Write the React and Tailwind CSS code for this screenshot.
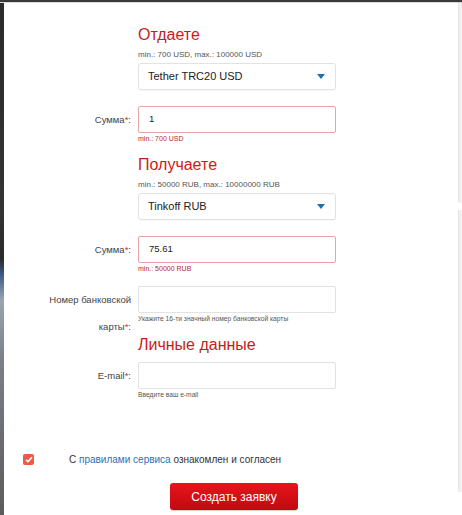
import React from "react";

function Row({ label, children }) {
  return (
    <div className="grid grid-cols-[127px_198px] gap-x-[7px]">
      <div className="h-[27px] text-right text-[9.5px] leading-[27px] text-[#444]">
        {label}
      </div>
      <div>{children}</div>
    </div>
  );
}

function Req() {
  return <span className="text-[#e03030]">*</span>;
}

function Select({ value }) {
  return (
    <div className="flex h-[27px] w-[198px] items-center justify-between rounded-[3px] border border-[#e2e2e2] bg-white pl-[9px] pr-[10px] shadow-[0_1px_1px_rgba(0,0,0,0.03)]">
      <span className="text-[11px] text-[#222]">{value}</span>
      <svg width="8" height="5" viewBox="0 0 8 5">
        <path d="M0 0 L8 0 L4 5 Z" fill="#1f6fae" />
      </svg>
    </div>
  );
}

function Input({ value, error }) {
  return (
    <div
      className={
        "flex h-[27px] w-[198px] items-center rounded-[2px] border bg-white pl-[10px] text-[9.5px] text-[#222] " +
        (error ? "border-[#e9a3a3]" : "border-[#e2e2e2]")
      }
    >
      {value}
    </div>
  );
}

function Heading({ children }) {
  return (
    <div className="text-[16px] leading-[20px] text-[#cc1a1a]">{children}</div>
  );
}

export default function App() {
  return (
    <div
      className="relative flex h-[515px] w-[462px] flex-col overflow-hidden bg-white"
      style={{ fontFamily: '"Liberation Sans", Arial, sans-serif' }}
    >
      <div className="h-[2px] w-full bg-[#3a3a3a]" />
      <div className="h-[1px] w-full bg-[#d8d8d8]" />
      <div className="flex flex-1">
        <div className="w-[4px] bg-[linear-gradient(to_bottom,#2b2b2b_0%,#333_40%,#2a2a2a_50%,#3d5a85_53%,#9aa4b2_58%,#7a7f88_70%,#5b5b5b_100%)]" />
        <div className="flex flex-1 flex-col">
          <div className="mt-[22px] flex flex-col">
            <div className="grid grid-cols-[127px_198px] gap-x-[7px]">
              <div />
              <div>
                <Heading>Отдаете</Heading>
                <div className="mt-[5px] text-[8px] leading-[10px] text-[#555]">
                  min.: 700 USD, max.: 100000 USD
                </div>
                <div className="mt-[3px]">
                  <Select value="Tether TRC20 USD" />
                </div>
              </div>
            </div>
            <div className="mt-[16px]">
              <Row label={<>Сумма<Req />:</>}>
                <Input value="1" error />
                <div className="mt-[1px] text-[7px] leading-[10px] text-[#b02828]">
                  min.: 700 USD
                </div>
              </Row>
            </div>
            <div className="mt-[11px] grid grid-cols-[127px_198px] gap-x-[7px]">
              <div />
              <div>
                <Heading>Получаете</Heading>
                <div className="mt-[5px] text-[8px] leading-[10px] text-[#555]">
                  min.: 50000 RUB, max.: 10000000 RUB
                </div>
                <div className="mt-[3px]">
                  <Select value="Tinkoff RUB" />
                </div>
              </div>
            </div>
            <div className="mt-[16px]">
              <Row label={<>Сумма<Req />:</>}>
                <Input value="75.61" error />
                <div className="mt-[1px] text-[7px] leading-[10px] text-[#b02828]">
                  min.: 50000 RUB
                </div>
              </Row>
            </div>
            <div className="mt-[12px]">
              <Row
                label={
                  <>
                    <div>Номер банковской</div>
                    <div>
                      карты<Req />:
                    </div>
                  </>
                }
              >
                <Input value="" />
                <div className="mt-[1px] text-[6.7px] leading-[10px] text-[#555]">
                  Укажите 16-ти значный номер банковской карты
                </div>
              </Row>
            </div>
            <div className="mt-[11px] grid grid-cols-[127px_198px] gap-x-[7px]">
              <div />
              <Heading>Личные данные</Heading>
            </div>
            <div className="mt-[7px]">
              <Row label={<>E-mail<Req />:</>}>
                <Input value="" />
                <div className="mt-[1px] text-[6.7px] leading-[10px] text-[#555]">
                  Введите ваш e-mail
                </div>
              </Row>
            </div>
          </div>
          <div className="mt-[52px] flex items-center">
            <div className="ml-[19px] flex h-[11px] w-[11px] items-center justify-center rounded-[2px] bg-[#ef5a45]">
              <svg width="8" height="7" viewBox="0 0 8 7">
                <path d="M1 3.8 L3 5.6 L7 1.2" stroke="white" strokeWidth="1.6" fill="none" />
              </svg>
            </div>
            <div className="ml-[35px] text-[10px] text-[#333]">
              С <span className="text-[#2f6fb5]">правилами сервиса</span> ознакомлен и согласен
            </div>
          </div>
          <div className="mt-[16px] ml-[166px]">
            <div className="flex h-[27px] w-[128px] items-center justify-center rounded-[3px] bg-[linear-gradient(to_bottom,#e8141c,#bf0a10)] text-[12px] text-white shadow-[0_1px_1px_rgba(0,0,0,0.2)]">
              Создать заявку
            </div>
          </div>
        </div>
        <div className="flex w-[4px] flex-col gap-[7px] pb-[20px]">
          <div className="h-[200px] rounded-bl-[2px] border-l border-[#e4e4e4] bg-[#f1f1f1]" />
          <div className="h-[282px] rounded-bl-[2px] border-l border-[#e4e4e4] bg-[#f1f1f1]" />
        </div>
      </div>
    </div>
  );
}
